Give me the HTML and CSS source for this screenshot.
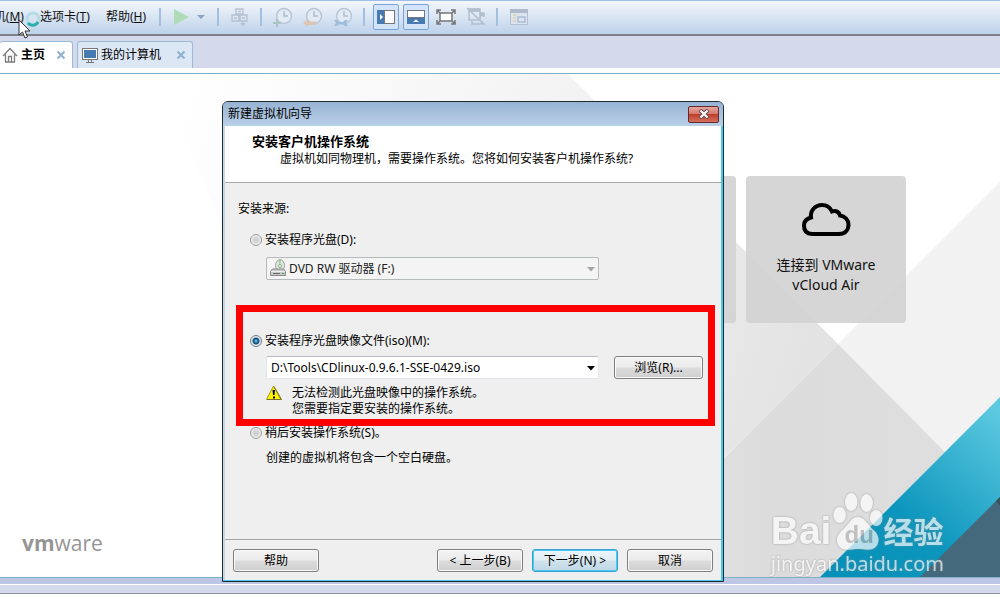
FILE: index.html
```html
<!DOCTYPE html>
<html lang="zh-CN">

<head>
  <meta charset="UTF-8">
  <meta name="viewport" content="width=device-width, initial-scale=1.0">
  <title>新建虚拟机向导</title>
  <link rel="stylesheet" href="styles.css">
</head>

<body>
  <header class="toolbar">
    <nav class="menu">
      <a href="#">机(<u>M</u>)</a>
      <a href="#">选项卡(<u>T</u>)</a>
      <a href="#">帮助(<u>H</u>)</a>
    </nav>
    <span class="sep"></span>
    <div class="tools tools-power">
      <button class="tool" aria-label="启动">
        <svg width="20" height="20" viewBox="0 0 20 20"><path d="M2 2L17 10L2 18Z" fill="#aedcb4"/></svg>
      </button>
      <button class="tool tool-arrow" aria-label="电源选项">
        <svg width="12" height="20" viewBox="0 0 12 20"><path d="M2 8H10L6 12Z" fill="#8ba3c0"/></svg>
      </button>
    </div>
    <span class="sep"></span>
    <button class="tool" aria-label="发送">
      <svg width="20" height="20" viewBox="0 0 20 20" fill="none" stroke="#b7c2d0" stroke-width="1.4">
        <path d="M6 2H13V7H6ZM2 8H9V14H2ZM10 8H17V14H10ZM4 11H7M12 11H15M8 4.500H11M13 14V18M11 16L13 18.500L15 16"/>
      </svg>
    </button>
    <span class="sep"></span>
    <div class="tools">
      <button class="tool" aria-label="拍摄快照">
        <svg width="20" height="20" viewBox="0 0 20 20" fill="none">
          <circle cx="11" cy="9" r="7.500" fill="#e2eaf4" stroke="#b9c6d6" stroke-width="1.500"/>
          <path d="M11 4V9H15" stroke="#aebccd" stroke-width="1.500"/>
          <path d="M4 12V20M0 16H8" stroke="#a9c5c4" stroke-width="2"/>
        </svg>
      </button>
      <button class="tool" aria-label="恢复快照">
        <svg width="20" height="20" viewBox="0 0 20 20" fill="none">
          <circle cx="11" cy="9" r="7.500" fill="#e2eaf4" stroke="#b9c6d6" stroke-width="1.500"/>
          <path d="M11 4V9H15" stroke="#aebccd" stroke-width="1.500"/>
          <path d="M0 16L5 12V14.500H13V18H5V20Z" fill="#dcc5b4"/>
        </svg>
      </button>
      <button class="tool" aria-label="管理快照">
        <svg width="20" height="20" viewBox="0 0 20 20" fill="none">
          <circle cx="11" cy="9" r="7.500" fill="#e2eaf4" stroke="#b9c6d6" stroke-width="1.500"/>
          <path d="M11 4V9H15" stroke="#aebccd" stroke-width="1.500"/>
          <path d="M1 13H4L6 15H10L12 13H15L13 16L15 19H12L10 17.500H6L4 19H1L3 16Z" fill="#9dbddb"/>
        </svg>
      </button>
    </div>
    <span class="sep"></span>
    <div class="tools">
      <button class="tool tool-on" aria-label="显示库">
        <svg width="20" height="20" viewBox="0 0 20 20">
          <rect x="1" y="3" width="18" height="14" fill="#4779b3"/>
          <rect x="8.500" y="3.500" width="10" height="13" fill="#fff" stroke="#777"/>
          <path d="M4 7L7 10L4 13Z" fill="#fff"/>
        </svg>
      </button>
      <button class="tool tool-on" aria-label="显示缩略图栏">
        <svg width="20" height="20" viewBox="0 0 20 20">
          <rect x="1" y="3" width="18" height="14" fill="#4779b3"/>
          <rect x="1.500" y="3.500" width="17" height="7" fill="#fff" stroke="#777"/>
          <path d="M7 15L10 12.500L13 15Z" fill="#fff"/>
        </svg>
      </button>
      <button class="tool" aria-label="全屏">
        <svg width="20" height="20" viewBox="0 0 20 20" fill="none" stroke="#757575" stroke-width="1.500">
          <rect x="4" y="6" width="12" height="8" fill="#fff"/>
          <path d="M1 7V3H5M15 3H19V7M19 13V17H15M5 17H1V13M1 3L4 6M19 3L16 6M19 17L16 14M1 17L4 14"/>
        </svg>
      </button>
      <button class="tool" aria-label="Unity">
        <svg width="20" height="20" viewBox="0 0 20 20" fill="none" stroke="#b3bfcd" stroke-width="1.500">
          <path d="M3 2H14V13H3ZM3 4H14M14 6H18V10M6 14V17H16V14"/>
          <path d="M3 3H14M14 8H18" stroke-width="3"/>
          <path d="M1 1L19 18"/>
        </svg>
      </button>
    </div>
    <span class="sep"></span>
    <button class="tool" aria-label="首选项">
      <svg width="20" height="20" viewBox="0 0 20 20" fill="none">
        <rect x="1.500" y="2.500" width="17" height="15" fill="#dbe4ef" stroke="#b3bfcd"/>
        <path d="M1 4H19" stroke="#aebaca" stroke-width="4"/>
        <path d="M4 8H7M4 11H7M4 14H7" stroke="#ddd6bd" stroke-width="2"/>
        <rect x="9" y="10" width="7" height="5" stroke="#a9bdd4" stroke-width="1.500"/>
      </svg>
    </button>
  </header>

  <div class="tabs">
    <div class="tab tab-active">
      <svg width="16" height="18" viewBox="0 0 16 18" fill="none" stroke="#7d7d7d" stroke-width="1.300">
        <path d="M1 10L8 2.500L15 10M3.500 8.500V16H12.500V8.500M6.500 16V10.500H9.500V16"/>
      </svg>
      <span class="tab-name">主页</span>
      <button class="tab-close" aria-label="关闭主页">
        <svg width="10" height="10" viewBox="0 0 10 10"><path d="M1.500 1.500L8.500 8.500M8.500 1.500L1.500 8.500" stroke="#8fb0cf" stroke-width="2"/></svg>
      </button>
    </div>
    <div class="tab">
      <svg width="16" height="18" viewBox="0 0 16 18">
        <rect x="0.500" y="2.500" width="15" height="11" fill="#fff" stroke="#777"/>
        <rect x="2" y="4" width="12" height="8" fill="#4779b3"/>
        <path d="M6.500 14V16M9.500 14V16M4 16.500H12" stroke="#777"/>
      </svg>
      <span class="tab-name">我的计算机</span>
      <button class="tab-close" aria-label="关闭我的计算机">
        <svg width="10" height="10" viewBox="0 0 10 10"><path d="M1.500 1.500L8.500 8.500M8.500 1.500L1.500 8.500" stroke="#8fb0cf" stroke-width="2"/></svg>
      </button>
    </div>
  </div>

  <main class="home">
    <svg class="backdrop" viewBox="0 0 1000 503" preserveAspectRatio="none" aria-hidden="true">
      <defs>
        <linearGradient id="fade" gradientUnits="userSpaceOnUse" x1="150" y1="100" x2="800" y2="300">
          <stop offset="0" stop-color="#fff"/>
          <stop offset="0.550" stop-color="#f3f3f3"/>
          <stop offset="1" stop-color="#e3e3e3"/>
        </linearGradient>
        <linearGradient id="shade" x1="0" y1="0" x2="1" y2="0">
          <stop offset="0" stop-color="#e4e4e4"/>
          <stop offset="0.500" stop-color="#dcdcdc"/>
          <stop offset="1" stop-color="#dedede"/>
        </linearGradient>
        <linearGradient id="teal" gradientUnits="userSpaceOnUse" x1="860" y1="500" x2="1000" y2="340">
          <stop offset="0" stop-color="#0791b9"/>
          <stop offset="0.350" stop-color="#0d96bd"/>
          <stop offset="1" stop-color="#5cc9e0"/>
        </linearGradient>
      </defs>
      <path d="M150 0H568L838 270L604 503H330Q260 200 150 0Z" fill="url(#fade)"/>
      <path d="M1000 108L838 270L945 378L1000 330Z" fill="#f2f2f2"/>
      <path d="M838 270L945 378L820 503H605Z" fill="url(#shade)"/>
      <path d="M1000 323L820 503H1000Z" fill="url(#teal)"/>
      <path d="M1000 423L920 503H1000Z" fill="#44697c"/>
      <path d="M1000 423L996 427L1000 432Z" fill="#3a525d"/>
    </svg>

    <div class="cards">
      <div class="card"></div>
      <a class="card" href="#">
        <svg width="50" height="36" viewBox="0 0 50 36" fill="none" stroke="#000" stroke-width="4">
          <path d="M11 32C5 32 3 28 3 23.500C3 19 6 16.500 10 15.500C9 9 14 3 21 3C26 3 29 5 31 9.500C35 8 38 10 39 13.500C44 14 47.500 18 47.500 22.500C47.500 28 44 32 38 32Z"/>
        </svg>
        <span>连接到 VMware<br>vCloud Air</span>
      </a>
    </div>

    <div class="vmware"><b>vm</b>ware</div>
  </main>

  <footer class="statusbar"></footer>

  <section class="dialog" role="dialog" aria-labelledby="dialog-title">
    <div class="titlebar">
      <span id="dialog-title">新建虚拟机向导</span>
      <button class="close" aria-label="关闭">
        <svg width="12" height="10" viewBox="0 0 12 10">
          <path d="M2 1L10 9M10 1L2 9" stroke="#6c4a52" stroke-width="4"/>
          <path d="M2.500 1.500L9.500 8.500M9.500 1.500L2.500 8.500" stroke="#fff" stroke-width="2"/>
        </svg>
      </button>
    </div>

    <div class="intro">
      <h1>安装客户机操作系统</h1>
      <p>虚拟机如同物理机，需要操作系统。您将如何安装客户机操作系统?</p>
    </div>

    <form class="options" id="wizard">
      <p class="source">安装来源:</p>

      <label class="option option-disc"><input type="radio" name="source">安装程序光盘(D):</label>
      <div class="combo combo-disc">
        <svg class="combo-icon" width="18" height="18" viewBox="0 0 18 18">
          <ellipse cx="11" cy="6.500" rx="4.500" ry="6" fill="#dfe3e4" stroke="#a2a2a2"/>
          <path d="M11 6L9 1.500A5 6 0 0 1 12 1Z" fill="#9dd38f"/>
          <circle cx="11" cy="7" r="1.500" fill="#fff" stroke="#7fb573"/>
          <path d="M3.500 10H14.500L16.500 12.500V16.500H1.500V12.500Z" fill="#c9c9c9" stroke="#8a8a8a"/>
          <path d="M2 12.500H16" stroke="#eee"/>
          <path d="M4 14.500H11" stroke="#666"/>
          <rect x="13" y="14" width="2" height="1" fill="#37b34a"/>
        </svg>
        <select aria-label="光盘驱动器" disabled>
          <option>DVD RW 驱动器 (F:)</option>
        </select>
        <svg class="combo-arrow" width="8" height="5" viewBox="0 0 8 5"><path d="M0 0H8L4 4.500Z" fill="#a5a5a5"/></svg>
      </div>

      <label class="option option-iso"><input type="radio" name="source" checked>安装程序光盘映像文件(iso)(M):</label>
      <div class="iso-row">
        <div class="combo combo-iso">
          <select aria-label="映像文件">
            <option>D:\Tools\CDlinux-0.9.6.1-SSE-0429.iso</option>
          </select>
          <svg class="combo-arrow" width="8" height="5" viewBox="0 0 8 5"><path d="M0 0H8L4 4.500Z" fill="#000"/></svg>
        </div>
        <button class="btn browse" type="button">浏览(R)...</button>
      </div>
      <div class="warning">
        <svg width="16" height="16" viewBox="0 0 16 16">
          <path d="M7.500 1L15 14.500H0.500Z" fill="#fff200" stroke="#a59a2c" stroke-linejoin="round"/>
          <path d="M8 1.500L15.500 14.500H1" fill="none" stroke="#77702e"/>
          <path d="M6.500 5H9L8.500 10H7ZM7 11.500H9V13.500H7Z" fill="#000"/>
        </svg>
        <p>无法检测此光盘映像中的操作系统。<br>您需要指定要安装的操作系统。</p>
      </div>

      <label class="option option-later"><input type="radio" name="source">稍后安装操作系统(S)。</label>
      <p class="note">创建的虚拟机将包含一个空白硬盘。</p>
    </form>

    <div class="actions">
      <button class="btn help" type="button">帮助</button>
      <button class="btn" type="button">&lt; 上一步(B)</button>
      <button class="btn btn-default" type="submit" form="wizard">下一步(N) &gt;</button>
      <button class="btn" type="button">取消</button>
    </div>

    <div class="highlight"></div>
  </section>

  <div class="watermark">
    <div class="watermark-logo">
      <span class="watermark-latin">Bai</span>
      <span class="paw">
        <svg width="52" height="60" viewBox="0 0 54 60" preserveAspectRatio="none" fill="#fff">
          <ellipse cx="9" cy="23" rx="6.500" ry="8"/>
          <ellipse cx="21" cy="10" rx="6.500" ry="9"/>
          <ellipse cx="37" cy="11" rx="6.500" ry="9"/>
          <ellipse cx="47" cy="26" rx="6.500" ry="8"/>
          <path d="M28 25C35 25 38 33 44 38C49 42 51 48 48 53C44 60 35 57 28 57C20 57 13 60 8 54C4 48 7 42 12 38C18 33 21 25 28 25Z"/>
        </svg>
        <span class="paw-text">du</span>
      </span>
      <span class="watermark-cn">经验</span>
    </div>
    <div class="watermark-url">jingyan.baidu.com</div>
  </div>

  <svg class="cursor" width="26" height="30" viewBox="0 0 26 30" aria-hidden="true">
    <circle cx="15" cy="8" r="6" fill="none" stroke="#b4dde6" stroke-width="3"/>
    <path d="M10 12A6 6 0 0 0 20 11" fill="none" stroke="#2db0ad" stroke-width="3"/>
    <path d="M1 9V24L4.500 21L7 27L9.500 26L7 20H12Z" fill="#fff" stroke="#333"/>
  </svg>
</body>

</html>
```
FILE: styles.css
```css
* {
  box-sizing: border-box;
}

body {
  display: flex;
  flex-direction: column;
  position: relative;
  min-height: 100vh;
  margin: 0;
  padding-bottom: 5px;
  overflow: hidden;
  background-color: #fff;
  color: #000;
  font-family: "Noto Sans", "Noto Sans CJK SC", sans-serif;
  font-size: 12px;
  line-height: 18px;
}

h1,
p {
  margin: 0;
}

button,
select {
  margin: 0;
  padding: 0;
  color: inherit;
  font: inherit;
}

svg {
  display: block;
  flex: none;
}

/* Toolbar */
.toolbar {
  display: flex;
  align-items: center;
  height: 36px;
  padding-bottom: 1px;
  border-top: 1px solid #9dbfe6;
  border-bottom: 2px solid #7d8086;
  background: linear-gradient(#f3f7fc, #dbe6f3 45%, #bdd2eb);
}

.menu {
  display: flex;
  flex: none;
  justify-content: flex-end;
  gap: 16px;
  width: 149px;
  padding-right: 3px;
  white-space: nowrap;
}

.menu a {
  color: #111;
  text-decoration: none;
}

.sep {
  flex: none;
  width: 2px;
  height: 18px;
  margin: 0 11px 0 10px;
  background-color: #a3bfe0;
}

.tools {
  display: flex;
  align-items: center;
  gap: 10px;
}

.tools-power {
  gap: 3px;
}

.tool {
  flex: none;
  width: 20px;
  border: 0;
  background: none;
}

.tool-arrow {
  width: 12px;
}

.tool-on {
  width: 26px;
  margin: 0 -3px;
  padding: 2px;
  border: 1px solid #7ba4d6;
  border-radius: 2px;
  background-color: #d3e4fa;
}

/* Tabs */
.tabs {
  display: flex;
  align-items: flex-end;
  gap: 4px;
  height: 38px;
  border-bottom: 1px solid #7fb0c4;
  background: linear-gradient(#d4d9ec 32px, #fff 32px);
  padding-bottom: 5px;
}

.tab {
  display: flex;
  align-items: center;
  gap: 3px;
  height: 27px;
  padding: 0 6px 0 4px;
  border: 1px solid #9bb9d6;
  border-bottom: 0;
  border-radius: 3px 3px 0 0;
  background-color: #dce7f5;
}

.tab-active {
  padding: 0 6px 0 2px;
  border-left: 0;
  background-color: #fff;
  font-weight: bold;
}

.tab-close {
  margin-left: 8px;
  border: 0;
  background: none;
}

.tab:not(.tab-active) .tab-close {
  margin-left: 12px;
}

/* Home page */
.home {
  display: flex;
  flex: 1;
  flex-direction: column;
  justify-content: space-between;
  position: relative;
  background-color: #fff;
}

.backdrop {
  position: absolute;
  inset: 0;
  width: 100%;
  height: 100%;
}

.cards {
  display: flex;
  justify-content: flex-end;
  gap: 10px;
  position: relative;
  padding: 102px 94px 0 0;
}

.card {
  display: flex;
  flex-direction: column;
  align-items: center;
  gap: 17px;
  width: 160px;
  height: 147px;
  padding-top: 26px;
  border-radius: 4px;
  background-color: rgba(211, 211, 211, 0.92);
  color: #111;
  font-size: 14px;
  line-height: 20px;
  text-align: center;
  text-decoration: none;
}

.vmware {
  position: relative;
  padding: 0 0 21px 22px;
  color: #959595;
  font-family: "Open Sans", sans-serif;
  font-size: 21px;
  font-weight: 400;
  line-height: 26px;
}

.vmware b {
  font-weight: 700;
}

.statusbar {
  height: 17px;
  border-top: 1px solid #7fb0c4;
  border-bottom: 1px solid #8f929c;
  background: linear-gradient(#bdc6e4 6px, #fff 6px, #fff 7px, #d4d9ec 7px);
}

/* Wizard window */
.dialog {
  position: absolute;
  top: 101px;
  left: 222px;
  width: 502px;
  border: 1px solid #1d2b33;
  border-radius: 6px 6px 0 0;
  background-color: #efefef;
  box-shadow: inset -2px -1px #45c8ea, inset 2px 0 #c3d7ea;
}

.titlebar {
  display: flex;
  align-items: center;
  justify-content: space-between;
  height: 24px;
  padding: 0 4px 0 5px;
  border-radius: 5px 5px 0 0;
  background: linear-gradient(#97b3d2, #bad0e9);
}

.close {
  display: flex;
  align-items: center;
  justify-content: center;
  width: 31px;
  height: 17px;
  border: 1px solid #5f2a32;
  border-radius: 2px;
  background: linear-gradient(#e5a79c, #d67a6c 45%, #bf3e2c 50%, #d5705c);
}

.intro {
  margin: 0 2px;
  padding: 6px 27px 14px;
  border-bottom: 1px solid #a5a5a5;
  background-color: #fff;
}

.intro h1 {
  font-size: 13px;
  line-height: 18px;
}

.intro p {
  padding-left: 28px;
}

.options {
  padding: 17px 20px 72px 15px;
}

.option {
  display: flex;
  align-items: center;
  gap: 3px;
  padding-left: 12px;
}

.option input {
  appearance: none;
  width: 12px;
  height: 12px;
  margin: 0;
  border: 1px solid #9a9b9b;
  border-radius: 50%;
  background: radial-gradient(#cfd2d4 30%, #f4f4f4 75%);
}

.option input:checked {
  border-color: #6d7d8a;
  background: radial-gradient(circle at 5px 5px, #7fd0ee, #1b6c9c 2px, #12476c 3px, #e8eef2 4px);
}

.option-disc {
  margin-top: 13px;
}

.option-iso {
  margin-top: 52px;
}

.option-later {
  margin-top: 7px;
}

.combo {
  position: relative;
  width: 333px;
  height: 23px;
}

.combo select {
  appearance: none;
  width: 100%;
  height: 100%;
  padding: 0 20px 0 4px;
  border: 1px solid #e2e5ea;
  border-top-color: #b9bcc2;
  border-radius: 2px;
  background-color: #fff;
}

.combo-disc {
  margin: 8px 0 0 28px;
}

.combo-disc select {
  padding-left: 22px;
  border-color: #b5babd;
  background-color: #f4f4f4;
  color: #222;
  opacity: 1;
}

.combo-icon,
.combo-arrow {
  position: absolute;
  pointer-events: none;
}

.combo-icon {
  top: 2px;
  left: 3px;
}

.combo-arrow {
  top: 10px;
  right: 4px;
}

.iso-row {
  display: flex;
  justify-content: space-between;
  margin-top: 6px;
  padding-left: 28px;
}

.btn {
  width: 86px;
  height: 23px;
  border: 1px solid #7f7f7f;
  border-radius: 3px;
  background: linear-gradient(#f3f3f3, #ebebeb 48%, #dcdcdc 52%, #cfcfcf);
  box-shadow: inset 0 0 0 1px #f9f9f9;
}

.browse {
  width: 89px;
}

.btn-default {
  border-color: #3c9fd1;
  background: linear-gradient(#eef5f9, #e0edf4 48%, #cfe2ec 52%, #bfd7e5);
  box-shadow: inset 0 0 0 1px #45cdf5;
}

.warning {
  display: flex;
  gap: 10px;
  margin-top: 6px;
  padding-left: 28px;
  line-height: 16px;
}

.note {
  margin-top: 7px;
  padding-left: 28px;
}

.actions {
  display: flex;
  gap: 9px;
  margin: 0 2px;
  padding: 9px 8px;
  border-top: 1px solid #a5a5a5;
}

.help {
  margin-right: auto;
}

/* Red frame around the ISO choice */
.highlight {
  position: absolute;
  top: 203px;
  left: 13px;
  width: 479px;
  height: 121px;
  border: 7px solid #f00;
  pointer-events: none;
}

/* Watermark */
.watermark {
  position: absolute;
  right: 56px;
  bottom: 23px;
  color: #fff;
  opacity: 0.7;
  filter: drop-shadow(0 0 1px #888);
  pointer-events: none;
}

.watermark-logo {
  display: flex;
  align-items: flex-end;
  height: 60px;
}

.watermark-latin {
  font-family: "Liberation Sans", sans-serif;
  font-size: 39px;
  font-weight: bold;
  line-height: 42px;
}

.paw {
  position: relative;
}

.paw-text {
  position: absolute;
  top: 31px;
  left: 13px;
  color: #b4b4b4;
  font-family: "Liberation Sans", sans-serif;
  font-size: 24px;
  font-weight: bold;
  line-height: 24px;
}

.watermark-cn {
  font-size: 30px;
  font-weight: bold;
  line-height: 40px;
}

.watermark-url {
  font-size: 20px;
  line-height: 24px;
}

.cursor {
  position: absolute;
  top: 11px;
  left: 18px;
  pointer-events: none;
}
```
